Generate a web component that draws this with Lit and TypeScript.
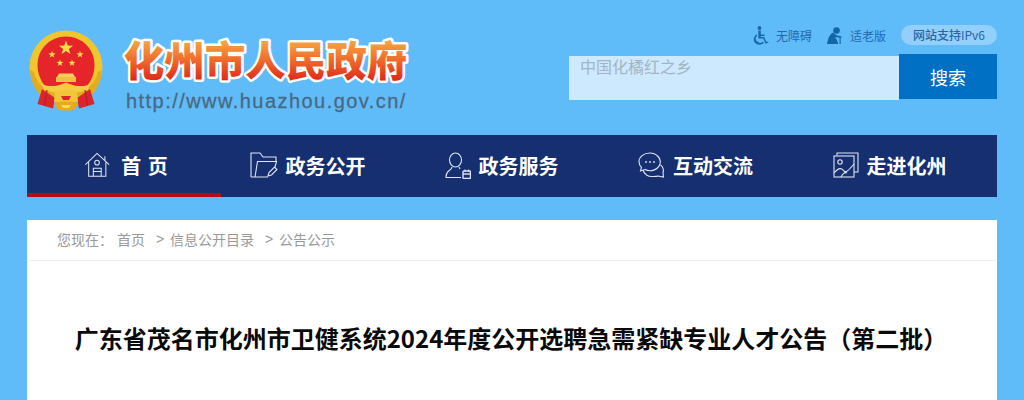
import { LitElement, html, css, svg } from "lit";
import { customElement } from "lit/decorators.js";

const star = (cx: number, cy: number, r: number) => {
  const pts: string[] = [];
  for (let i = 0; i < 10; i++) {
    const rad = i % 2 ? r * 0.4 : r;
    const a = (-90 + i * 36) * Math.PI / 180;
    pts.push(`${(cx + rad * Math.cos(a)).toFixed(2)},${(cy + rad * Math.sin(a)).toFixed(2)}`);
  }
  return svg`<polygon points=${pts.join(" ")} fill="#f6dc45"/>`;
};

const emblem = html`<svg class="emblem" width="76" height="82" viewBox="0 0 76 82">
  <circle cx="38" cy="37" r="36.5" fill="#f0c62f"/>
  <path d="M2 40 C3 54 9 63 16 68 L60 68 C67 63 73 54 74 40 L70 42 C67 54 58 64 38 64 C18 64 9 54 6 42Z" fill="#e3ac20"/>
  <path d="M38 6.5 C22 6.5 9.5 19 9.5 35 C9.5 44 13 51 17 56 L59 56 C63 51 66.5 44 66.5 35 C66.5 19 54 6.5 38 6.5Z" fill="#e6252b"/>
  ${star(38, 18, 7.5)}${star(24, 24.5, 3.8)}${star(52, 24.5, 3.8)}${star(32, 33, 3.6)}${star(44, 33, 3.6)}
  <path d="M31 43.5 L45 43.5 L47 47 L29 47Z" fill="#f4cf5c"/>
  <rect x="28" y="47" width="20" height="5" fill="#eec044"/>
  <path d="M14 54 C22 58 30 56 38 52.5 C46 56 54 58 62 54 L60 60 C52 63 44 62 38 59 C32 62 24 63 16 60Z" fill="#f4cc45"/>
  <path d="M14 59 L9.5 74 L25 78.5 L27 68 Z M62 59 L66.5 74 L51 78.5 L49 68 Z" fill="#d9252b"/>
  <path d="M19 60 L16.5 75 M57 60 L59.5 75" stroke="#b81c24" stroke-width="1.2"/>
  <path d="M27 62 C32 59 44 59 49 62 L50 72 C44 69 32 69 26 72Z" fill="#f1c738"/>
  <path d="M33 66 H43 L41 70 H35Z" fill="#d9252b"/>
  <path d="M26 73 C32 71 44 71 50 73 L47 79 C42 81 34 81 29 79Z" fill="#e7a91e"/>
  <path d="M33 75 H43 L41 78 H35Z" fill="#f6dc45"/>
</svg>`;

const titleSvg = html`<svg class="title" width="296" height="60" viewBox="0 0 296 60">
  <defs>
    <linearGradient id="tg" x1="0" y1="0" x2="0" y2="1">
      <stop offset="0.1" stop-color="#f9b84a"/>
      <stop offset="0.5" stop-color="#f0722e"/>
      <stop offset="0.9" stop-color="#de2418"/>
    </linearGradient>
  </defs>
  <text class="title-text" x="144.5" y="44.5" text-anchor="middle" fill="url(#tg)" stroke="#fff" stroke-width="5" stroke-linejoin="round" paint-order="stroke">化州市人民政府</text>
</svg>`;

const iHome = html`<svg width="27" height="26" viewBox="0 0 28 28" fill="none" stroke="#dfe6f4" stroke-width="1.1">
  <path d="M1 13.5 L13.5 1.5 L26.5 13.5 M22 9 V4.5 M4.5 11 V26 H23 V11"/>
  <circle cx="13.5" cy="11.5" r="2.5"/>
  <path d="M9.5 26 V17.5 H18 V26 M9.5 21 H18"/>
</svg>`;

const iFolder = html`<svg width="28" height="26" viewBox="0 0 28 26" fill="none" stroke="#dfe6f4" stroke-width="1.1">
  <path d="M1 25 V1 H10 L13 5 H26 V9"/>
  <path d="M1 25 H18 M5 25 L7.5 9.5 H26.5 L25 15"/>
  <path d="M18 24 L19 20.5 L24.5 15 L27 17.5 L21.5 23Z"/>
</svg>`;

const iUser = html`<svg width="26" height="27" viewBox="0 0 26 27" fill="none" stroke="#dfe6f4" stroke-width="1.1">
  <ellipse cx="10.5" cy="8" rx="6" ry="7"/>
  <path d="M7 15 C7 17 5 18 3 19.5 C1.5 21 1 23 1 25.5 H16"/>
  <path d="M14 15 L15 17"/>
  <rect x="18" y="19" width="7.5" height="7.5" rx="1" stroke-width="1.4"/>
  <path d="M18 22 H25.5" stroke-width="1.4"/>
  <path d="M20 17.5 V19.5 M23.5 17.5 V19.5"/>
</svg>`;

const iChat = html`<svg width="27" height="26" viewBox="0 0 27 26" fill="none" stroke="#dfe6f4" stroke-width="1.1">
  <path d="M12 1 C5.5 1 1 5 1 9.5 C1 12 2 14 3.5 15.5 L2.5 19 L7 17.5 C12 20 20 18.5 22 12 C23.5 6 18 1 12 1Z"/>
  <path d="M5 18 C6 22 10 25 15 24.5 C17 24.5 19 24.5 20 24 L25.5 25 L25 20.5 C26 18 25 14.5 22.5 13"/>
  <circle cx="8" cy="10" r="0.9" fill="#dfe6f4" stroke="none"/>
  <circle cx="12" cy="10" r="0.9" fill="#dfe6f4" stroke="none"/>
  <circle cx="16" cy="10" r="0.9" fill="#dfe6f4" stroke="none"/>
</svg>`;

const iPhoto = html`<svg width="26" height="26" viewBox="0 0 26 26" fill="none" stroke="#dfe6f4" stroke-width="1.1">
  <path d="M4 3.5 V1 H25 V20 H21"/>
  <rect x="1" y="4" width="20" height="21"/>
  <circle cx="7" cy="10" r="2.2"/>
  <path d="M1 21 C6 15 9 16 11 19 C13 21 15 19 21 12 M8 25 C10 21 12 20 14 21"/>
</svg>`;

const iWheel = html`<svg width="17" height="19" viewBox="0 0 17 19" fill="#1668ab">
  <circle cx="7.5" cy="2" r="1.9"/>
  <path d="M6.3 4.5 H8.8 V8.5 H12.5 V10 H8.8 L8.8 11 H12.2 L14.5 16 L16 15.4 L16.5 16.6 L13.6 17.8 L11.3 12.5 H6.3Z"/>
  <path d="M5 8.2 V9.8 A4 4 0 1 0 11 15.4 L11.8 16.7 A5.6 5.6 0 1 1 5 8.2Z"/>
</svg>`;

const iOld = html`<svg width="15" height="17" viewBox="0 0 15 17" fill="#1266a8">
  <circle cx="9.5" cy="3.5" r="3.3"/>
  <path d="M6 5.5 C3 7 1 11 0 17 H11 C11 14 9 11.5 8 10 L14.5 11 V9.6 L9.5 8.2Z"/>
  <path d="M12.5 11 H13.7 V17 H12.5Z"/>
</svg>`;

const navItems = [
  { icon: iHome, label: "首 页", active: true },
  { icon: iFolder, label: "政务公开" },
  { icon: iUser, label: "政务服务" },
  { icon: iChat, label: "互动交流" },
  { icon: iPhoto, label: "走进化州" },
];

@customElement("app-root")
export class AppRoot extends LitElement {
  static styles = css`
    :host {
      display: block;
      height: 400px;
      overflow: hidden;
      background: #5fbcf9;
      font-family: "Noto Sans CJK SC", "Liberation Sans", sans-serif;
    }
    .wrap { width: 970px; margin-left: 27px; }
    .head {
      display: flex;
      justify-content: space-between;
      height: 135px;
    }
    .brand { display: flex; align-items: flex-start; padding: 30px 0 0 1px; }
    .emblem { display: block; }
    .brand-text { display: flex; flex-direction: column; margin-left: 17px; padding-top: 1px; }
    .title { display: block; }
    .title-text {
      font-family: "Noto Sans CJK SC", sans-serif;
      font-weight: 900;
      font-size: 40.5px;
    }
    .url {
      font-family: "Liberation Sans", sans-serif;
      font-size: 20px;
      line-height: 24px;
      color: #4a6884;
      -webkit-text-stroke: 0.3px #4a6884;
      letter-spacing: 1.45px;
      margin: -2px 0 0 5px;
      white-space: nowrap;
    }
    .right { width: 428px; padding-top: 25px; display: flex; flex-direction: column; }
    .tools { display: flex; justify-content: flex-end; align-items: center; height: 20px; color: #2569ad; font-size: 12px; }
    .tool { display: flex; align-items: center; }
    .tool svg { display: block; }
    .tool-wheel { gap: 7px; margin-right: 15px; }
    .tool-old { gap: 8px; margin-right: 15px; }
    .pill {
      width: 96px; height: 20px; border-radius: 10px; background: #92cffa;
      color: #2a64a8; font-size: 12px; line-height: 20px; text-align: center;
      font-weight: 500; white-space: nowrap;
    }
    .pill span { font-weight: 400; }
    .search { display: flex; margin-top: 9px; align-items: flex-start; }
    .input {
      width: 330px; height: 44px; margin-top: 2px; background: #cde9fe;
      box-sizing: border-box; padding: 0 0 0 11px; color: #a4b4c2; font-size: 16px; line-height: 20px;
    }
    .btn {
      width: 98px; height: 45px; background: #0070c4; color: #fff;
      font-size: 18px; line-height: 47px; text-align: center;
    }
    .nav { display: flex; height: 62px; background: #162f70; }
    .nav-item {
      width: 194px; height: 62px; box-sizing: border-box;
      display: flex; align-items: center; justify-content: center; gap: 8px;
      color: #fff; font-size: 20px; font-weight: 700; white-space: pre;
      padding-right: 21px;
      padding-bottom: 2px;
    }
    .nav-item svg { display: block; flex: none; }
    .nav-item.active {
      border-bottom: 4px solid #b8071c; padding: 2px 0 0 5px; gap: 10px; letter-spacing: 1px;
    }
    .card { margin-top: 23px; background: #fff; height: 180px; }
    .crumbs {
      height: 41px; box-sizing: border-box; border-bottom: 1px solid #eeeeee;
      padding: 0 0 2px 30px; display: flex; align-items: center;
      color: #999; font-size: 14px; white-space: pre;
    }
    .crumbs .here { width: 60px; }
    .crumbs .sep { margin: 0 0 0 11px; font-family: "Liberation Sans", sans-serif; width: 14px; }
    h1 {
      margin: 59px 0 0; font-size: 24px; line-height: 36px; font-weight: 700; color: #0a0a0a;
      text-align: center; white-space: nowrap; padding-right: 2px;
    }
  `;

  render() {
    return html`<div class="wrap">
      <header class="head">
        <div class="brand">
          ${emblem}
          <div class="brand-text">
            ${titleSvg}
            <div class="url">http://www.huazhou.gov.cn/</div>
          </div>
        </div>
        <div class="right">
          <div class="tools">
            <div class="tool tool-wheel">${iWheel}<span>无障碍</span></div>
            <div class="tool tool-old">${iOld}<span>适老版</span></div>
            <div class="pill">网站支持<span>IPv6</span></div>
          </div>
          <div class="search">
            <div class="input">中国化橘红之乡</div>
            <div class="btn">搜索</div>
          </div>
        </div>
      </header>
      <nav class="nav">
        ${navItems.map(n => html`<div class="nav-item ${n.active ? "active" : ""}">${n.icon}<span>${n.label}</span></div>`)}
      </nav>
      <section class="card">
        <div class="crumbs"><span class="here">您现在：</span><span>首页</span><span class="sep">&gt;</span><span>信息公开目录</span><span class="sep">&gt;</span><span>公告公示</span></div>
        <h1>广东省茂名市化州市卫健系统2024年度公开选聘急需紧缺专业人才公告（第二批）</h1>
      </section>
    </div>`;
  }
}
